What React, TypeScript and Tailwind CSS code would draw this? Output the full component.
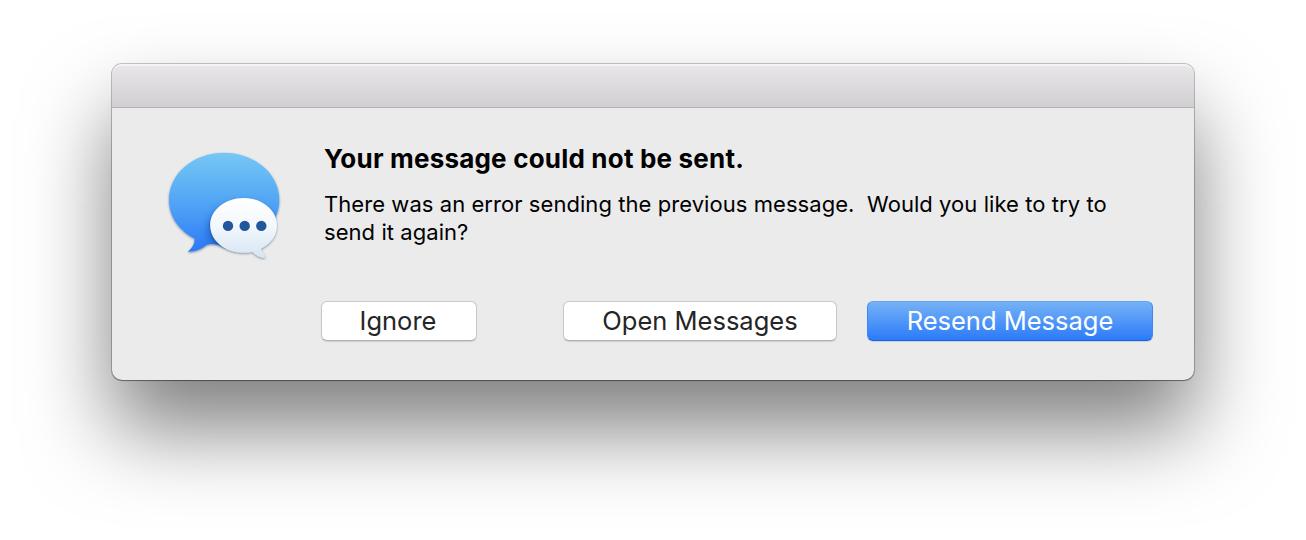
import React from "react";

function MessagesIcon() {
  return (
    <svg width="130" height="126" viewBox="158 143 130 126" className="block" aria-hidden="true">
      <defs>
        <linearGradient id="blue" x1="0" y1="152" x2="0" y2="252" gradientUnits="userSpaceOnUse">
          <stop offset="0" stopColor="#76c8f5" />
          <stop offset="0.25" stopColor="#64b7f4" />
          <stop offset="0.65" stopColor="#4799f6" />
          <stop offset="1" stopColor="#2d78f6" />
        </linearGradient>
        <linearGradient id="white" x1="0" y1="198" x2="0" y2="258" gradientUnits="userSpaceOnUse">
          <stop offset="0" stopColor="#ffffff" />
          <stop offset="0.45" stopColor="#f3f8fc" />
          <stop offset="1" stopColor="#d6e5f3" />
        </linearGradient>
        <clipPath id="bubble">
          <path d="M224 152.800C254.500 152.800 279.300 173.500 279.300 200C279.300 226.500 254.500 247 224 247Q215 243 207.500 244.500Q198 252 187.800 251.700Q195.300 245.500 194.500 238.500C179 230.500 169 216.500 169 200C169 173.500 193.500 152.800 224 152.800Z" />
        </clipPath>
        <filter id="soft" x="-20%" y="-20%" width="140%" height="150%">
          <feDropShadow dx="0" dy="1" stdDeviation="1.1" floodColor="#183050" floodOpacity="0.5" />
        </filter>
        <filter id="blur" x="-30%" y="-30%" width="160%" height="160%">
          <feGaussianBlur stdDeviation="5" />
        </filter>
      </defs>
      <path filter="url(#soft)" fill="url(#blue)" d="M224 152.800C254.500 152.800 279.300 173.500 279.300 200C279.300 226.500 254.500 247 224 247Q215 243 207.500 244.500Q198 252 187.800 251.700Q195.300 245.500 194.500 238.500C179 230.500 169 216.500 169 200C169 173.500 193.500 152.800 224 152.800Z" />
      <g clipPath="url(#bubble)">
        <ellipse cx="241" cy="230" rx="32" ry="25" fill="#0a3d91" opacity="0.6" filter="url(#blur)" />
      </g>
      <path filter="url(#soft)" fill="url(#white)" d="M243.500 198C262 198 276.900 210.200 276.900 225.200C276.900 236 270.500 244 260.900 248.700Q261.500 252 264.900 255.200L264.500 257.900Q257.500 257.500 252.500 251.900Q248.500 252.700 243.500 252.700C225 252.700 210.200 240.500 210.200 225.200C210.200 210.200 225 198 243.500 198Z" />
      <g fill="#22569d">
        <circle cx="228" cy="225.900" r="5.200" />
        <circle cx="244.700" cy="225.900" r="5.200" />
        <circle cx="261.300" cy="225.900" r="5.200" />
      </g>
    </svg>
  );
}

const plainButton =
  "h-10 rounded-[6px] border border-[#c9c9c9] border-b-[#b0b0b0] bg-white text-[#252525] shadow-[0_1px_1px_rgba(0,0,0,0.12)] text-[25.5px] leading-[38px] whitespace-nowrap";

export default function App() {
  return (
    <main className="h-[540px] w-[1306px] overflow-hidden bg-white px-[112px] pt-16 font-['Inter','Liberation_Sans',sans-serif]">
      <section
        role="alertdialog"
        className="h-[316px] w-[1082px] rounded-[10px] bg-[#ebebeb] shadow-[0_0_0_1px_rgba(0,0,0,0.22),0_1px_1px_rgba(0,0,0,0.3),0_49px_84px_rgba(0,0,0,0.5)]"
      >
        <header className="h-11 rounded-t-[10px] border-t-2 border-b border-t-[#f5f4f5] border-b-[#b4b2b4] bg-linear-to-b from-[#e8e6e8] to-[#d1cfd1]" />
        <div className="flex h-[272px] pl-[46px] pt-[35px]">
          <div className="w-[166px] shrink-0">
            <MessagesIcon />
          </div>
          <div className="w-[870px]">
            <h1 className="h-8 text-[26px] leading-8 font-bold tracking-[0.2px] whitespace-nowrap text-black">Your message could not be sent.</h1>
            <p className="mt-[15px] h-14 text-[22px] leading-7 tracking-[0.06px] whitespace-pre text-black">
              {"There was an error sending the previous message.  Would you like to try to"}
              <br />
              send it again?
            </p>
            <div className="-ml-[3px] mt-[55px] flex">
              <button className={`${plainButton} w-[156px] pr-[2px]`}>Ignore</button>
              <button className={`${plainButton} ml-[86px] w-[274px]`}>Open Messages</button>
              <button className="ml-[30px] h-10 w-[286px] rounded-[6px] border border-t-[#61a4f5] border-r-[#3f88f6] border-b-[#1560f2] border-l-[#3f88f6] bg-linear-to-b from-[#75b1f6] to-[#2a7af8] text-[25.5px] leading-[38px] whitespace-nowrap text-white shadow-[0_1px_1px_rgba(0,0,0,0.12)]">
                Resend Message
              </button>
            </div>
          </div>
        </div>
      </section>
    </main>
  );
}
